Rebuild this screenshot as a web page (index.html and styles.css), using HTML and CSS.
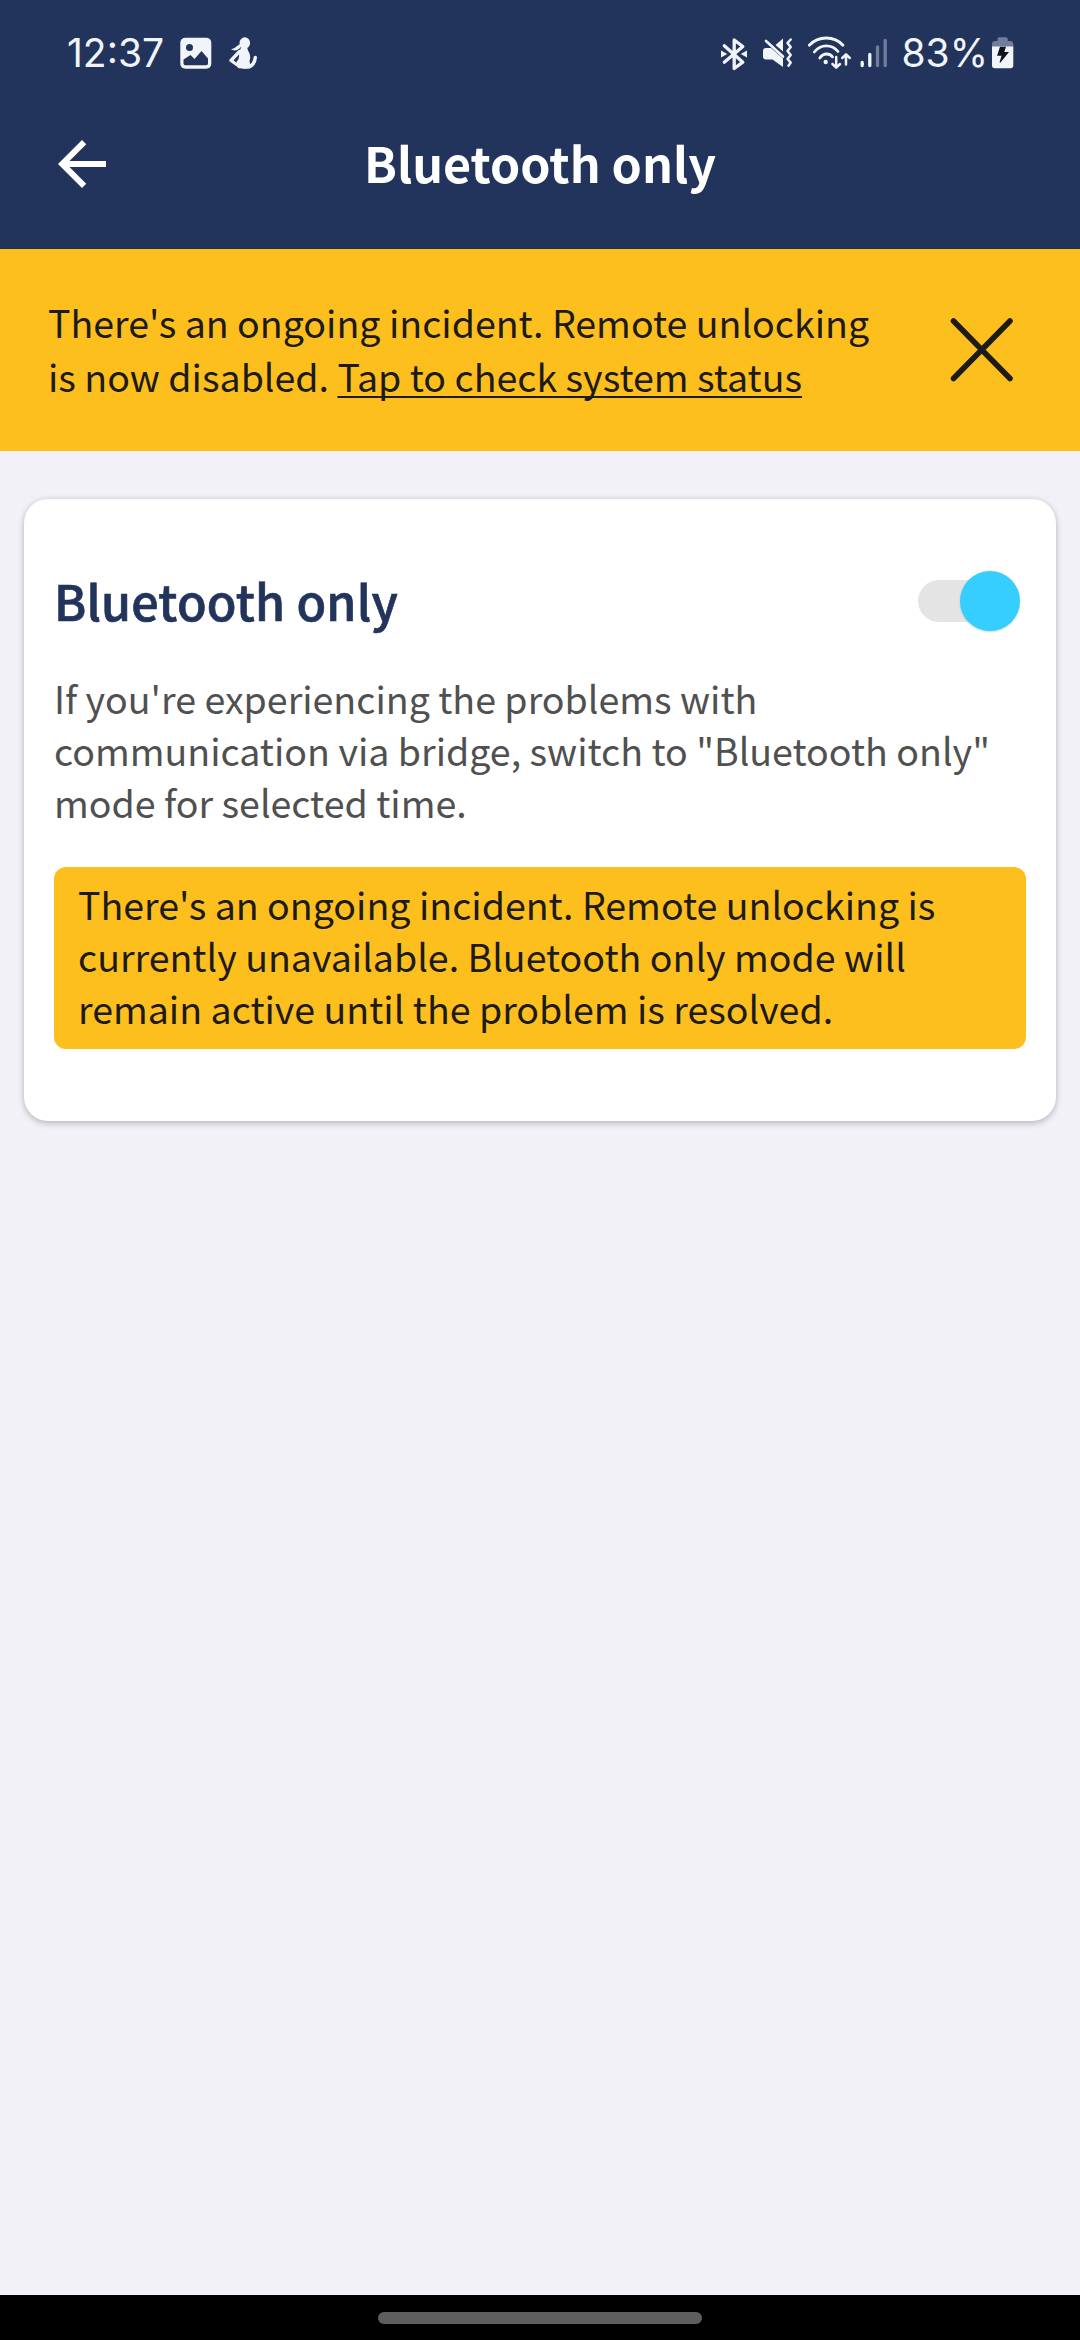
FILE: index.html
```
<!DOCTYPE html>
<html lang="en">
<head>
<meta charset="utf-8">
<title>Bluetooth only</title>
<link rel="stylesheet" href="styles.css">
</head>
<body>
<div class="screen">
  <header class="header">
    <div class="status">
      <span class="status-text">12:37</span>
      <svg class="icon-picture" width="32" height="32" viewBox="0 0 32 32">
        <rect x="0.3" y="0.8" width="31" height="31" rx="5" fill="#f1f5fa"/>
        <circle cx="9.5" cy="10.5" r="3.5" fill="#22345b"/>
        <path d="M3.5 26.5V22.5L10.5 18L14.5 22L21.5 14L28 21.5V26.5Q28 28.3 26.2 28.3H5.3Q3.5 28.3 3.5 26.5Z" fill="#22345b"/>
      </svg>
      <svg class="icon-person" width="29" height="32" viewBox="0 0 29 32">
        <g fill="#f1f5fa">
          <ellipse cx="15.8" cy="6" rx="5.3" ry="5.8"/>
          <path d="M12 7Q9.5 7 7.5 9.5Q5.5 11.500 2 12.300Q5.500 14.500 9 12.500Q11.500 11 12.500 9Z"/>
          <path d="M12.500 10H18Q18.500 13 20.300 16Q22 20 20.500 24L22 31Q17 32.500 9 31L7.500 25Q11.500 21 9.500 15.500Z"/>
        </g>
        <g fill="none" stroke="#f1f5fa" stroke-linecap="round" stroke-linejoin="round">
          <path d="M10.500 14.500L2 23.500L10.500 29.500" stroke-width="3.300"/>
          <path d="M12 29Q21 31.500 24 27Q26 24 26.300 20.500" stroke-width="3.400"/>
        </g>
      </svg>
      <div class="status-right">
        <svg class="icon-bluetooth" width="28" height="34" viewBox="0 0 28 34">
          <path d="M4.300 8.700L22.800 25.200L14.200 31.500V3L22.800 9.500L4.300 25.200" fill="none" stroke="#f1f5fa" stroke-width="3.300" stroke-linejoin="round" stroke-linecap="round"/>
          <path d="M1 13.500L7.300 17L1 20.500ZM27 13.500L20.700 17L27 20.500Z" fill="#f1f5fa"/>
        </svg>
        <svg class="icon-mute" width="30" height="32" viewBox="0 0 30 32">
          <path d="M3 11H8L20 21.500V30L9.500 22.500H3Q0 22.500 0 19.500V14Q0 11 3 11ZM12.500 8L20 1.500V14.500Z" fill="#f1f5fa"/>
          <path d="M3 4L20 19.500" stroke="#f1f5fa" stroke-width="2.600" stroke-linecap="round"/>
          <path d="M27.700 2.500L24.500 6L27.700 10L24.500 14L27.700 18L24.500 22L27.700 25.500L25.500 28.700" fill="none" stroke="#f1f5fa" stroke-width="2.500" stroke-linecap="round" stroke-linejoin="round"/>
        </svg>
        <svg class="icon-wifi" width="46" height="34" viewBox="0 0 46 34">
          <g fill="none" stroke="#f1f5fa" stroke-width="2.800" stroke-linecap="round" stroke-linejoin="round">
            <path d="M2.300 9.300Q9 2 19.300 2Q29.500 2 36 9.300"/>
            <path d="M7.300 16Q12 9.800 19.300 9.800Q26.500 9.800 31 15.500"/>
            <path d="M12.800 22Q15.500 18 19.500 18Q23.300 18 25.500 20.800"/>
            <path d="M29.200 21V31.500M25.500 28L29.200 31.700L33 28" stroke-width="2.500"/>
            <path d="M39 28.500V18.500M35.300 22L39 18.300L42.800 22" stroke-width="2.500"/>
          </g>
          <circle cx="18.700" cy="26" r="2.200" fill="#f1f5fa"/>
        </svg>
        <svg class="icon-signal" width="28" height="32" viewBox="0 0 28 32">
          <g stroke-width="3.300" stroke-linecap="round">
            <path d="M2.200 25.500V28.500M9.800 17.500V28.500" stroke="#f1f5fa"/>
            <path d="M17.500 10V28.500M25.200 3.500V28.500" stroke="#717d9d"/>
          </g>
        </svg>
        <span class="status-text battery-text">83%</span>
        <svg class="icon-battery" width="22" height="32" viewBox="0 0 22 32">
          <path d="M5.500 4V2Q5.500 0.300 7.200 0.300H14Q15.700 0.300 15.700 2V4H18Q21.300 4 21.300 7.300V10H0V7.300Q0 4 3.300 4Z" fill="#717d9d"/>
          <path d="M0 9.500H21.300V28.500Q21.300 31.300 18.500 31.300H2.800Q0 31.300 0 28.500Z" fill="#f1f5fa"/>
          <path d="M8 9.800H14L12.300 15H17L8.500 25.500H7.500L9.500 18.800H5Z" fill="#10141c"/>
        </svg>
      </div>
    </div>
    <div class="toolbar">
      <svg class="back" width="72" height="72" viewBox="0 0 24 24"><path d="M20 11H7.830L13.420 5.410L12 4L4 12L12 20L13.410 18.590L7.830 13H20Z" fill="#fff"/></svg>
      <h1 class="title">Bluetooth only</h1>
    </div>
  </header>
  <section class="banner">
    <p class="banner-text">There's an ongoing incident. Remote unlocking is now disabled. <a class="link">Tap to check system status</a></p>
    <svg class="close" width="64" height="66" viewBox="0 0 64 66"><path d="M3.500 4L60 61.500M60 4L3.500 61.500" stroke="#1d1b17" stroke-width="5.600" stroke-linecap="round"/></svg>
  </section>
  <main class="content">
    <section class="card">
      <div class="card-head">
        <h2 class="card-title">Bluetooth only</h2>
        <div class="switch"><div class="thumb"></div></div>
      </div>
      <p class="card-text">If you're experiencing the problems with communication via bridge, switch to "Bluetooth only" mode for selected time.</p>
      <p class="notice">There's an ongoing incident. Remote unlocking is currently unavailable. Bluetooth only mode will remain active until the problem is resolved.</p>
    </section>
  </main>
  <footer class="navbar"><div class="handle"></div></footer>
</div>
</body>
</html>
```
FILE: styles.css
```
* { box-sizing: border-box; margin: 0; padding: 0; }
svg { display: block; flex: none; }

body {
  font-family: "Noto Sans CJK JP", "Noto Sans", sans-serif;
  font-size: 37.55px;
  line-height: 52px;
  color: #1d1b17;
}

.screen {
  width: 1080px;
  height: 2340px;
  display: flex;
  flex-direction: column;
  background: #f2f1f7;
}

.header {
  height: 249px;
  background: #22345b;
  color: #fff;
}

.status {
  height: 106px;
  padding: 37px 66px 0 67px;
  display: flex;
  align-items: flex-start;
}
.status-text {
  font-family: Inter, sans-serif;
  font-size: 39px;
  line-height: 32px;
  color: #f1f5fa;
}
.icon-picture { margin-left: 16px; }
.icon-person { margin-left: 17px; }
.status-right {
  margin-left: auto;
  display: flex;
  align-items: flex-start;
}
.icon-mute { margin-left: 15px; }
.icon-wifi { margin: -1px 0 0 14px; }
.icon-signal { margin: 0 13px 0 7px; }
.icon-battery { margin-left: 4px; }

.toolbar {
  height: 116px;
  padding: 0 46px;
  display: grid;
  grid-template-columns: 72px 1fr 72px;
  align-items: center;
}
.title {
  font-size: 48.4px;
  font-weight: 700;
  line-height: 60px;
  text-align: center;
  padding-bottom: 4px;
}

.banner {
  height: 202px;
  padding: 0 66px 0 48px;
  display: flex;
  align-items: center;
  justify-content: space-between;
  background: #fdbf1d;
}
.banner-text {
  width: 845px;
  line-height: 54px;
  margin-top: -2px;
}
.link {
  text-decoration: underline;
  text-decoration-thickness: 2px;
  text-underline-offset: 4px;
  text-decoration-skip-ink: none;
}

.content {
  flex: 1;
  padding: 48px 24px;
}
.card {
  height: 622px;
  padding: 70px 30px 72px;
  border-radius: 24px;
  background: #fff;
  box-shadow: 0 3px 6px rgba(0, 0, 0, 0.17), 0 0 6px rgba(0, 0, 0, 0.11);
}
.card-head {
  height: 64px;
  display: flex;
  align-items: center;
  justify-content: space-between;
}
.card-title {
  padding-bottom: 3px;
  font-size: 48.4px;
  font-weight: 500;
  line-height: 60px;
  letter-spacing: 0.2px;
  color: #22345b;
  -webkit-text-stroke: 0.7px #22345b;
}
.switch {
  width: 100px;
  height: 42px;
  margin-right: 8px;
  display: flex;
  align-items: center;
  justify-content: flex-end;
  border-radius: 21px;
  background: #e4e4e4;
}
.thumb {
  flex: none;
  width: 60px;
  height: 60px;
  margin-right: -2px;
  border-radius: 50%;
  background: #35ceff;
  box-shadow: 0 1px 2px rgba(0, 60, 90, 0.2);
}
.card-text {
  margin-top: 39px;
  color: #505050;
}
.notice {
  height: 182px;
  margin-top: 39px;
  padding: 11px 24px;
  border-radius: 12px;
  background: #fdbf1d;
}

.navbar {
  height: 45px;
  padding-top: 17px;
  background: #000;
}
.handle {
  width: 324px;
  height: 12px;
  margin: 0 auto;
  border-radius: 6px;
  background: #5e5e5e;
}
```
